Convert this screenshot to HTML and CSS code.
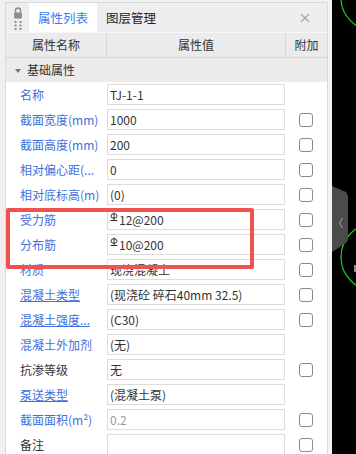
FILE: index.html
```html
<!DOCTYPE html>
<html>
  <head>
    <title>属性列表</title>
    <link rel="stylesheet" href="styles.css">
  </head>
  <body>
    <div class="panel">
      <div class="tabbar">
        <div class="lock">
          <svg width="12" height="24" viewBox="0 0 12 24">
            <path d="M3.5 6.5 V4.5 a2.5 2.5 0 0 1 5 0 V6.5" fill="none" stroke="#8c8c8c" stroke-width="1.6" />
            <rect x="2" y="6.5" width="8" height="6" rx="1" fill="#8c8c8c" />
            <rect x="2.5" y="15" width="2" height="2" fill="#8c8c8c" />
            <rect x="7.5" y="15" width="2" height="2" fill="#8c8c8c" />
            <rect x="2.5" y="18.5" width="2" height="2" fill="#8c8c8c" />
            <rect x="7.5" y="18.5" width="2" height="2" fill="#8c8c8c" />
            <rect x="2.5" y="22" width="2" height="2" fill="#8c8c8c" />
            <rect x="7.5" y="22" width="2" height="2" fill="#8c8c8c" />
          </svg>
        </div>
        <div class="tab active">属性列表</div>
        <div class="tab">图层管理</div>
        <div class="close">
          <svg width="10" height="10" viewBox="0 0 10 10">
            <path d="M1 1 L9 9 M9 1 L1 9" stroke="#a8a8a8" stroke-width="1.2" />
          </svg>
        </div>
      </div>

      <div class="thead">
        <div class="th">属性名称</div>
        <div class="th">属性值</div>
        <div class="th last">附加</div>
      </div>

      <div class="group"><span class="caret"></span>基础属性</div>

      <div class="row">
        <div class="label">名称</div>
        <div class="value">TJ-1-1</div>
        <div></div>
      </div>
      <div class="row">
        <div class="label">截面宽度(mm)</div>
        <div class="value">1000</div>
        <div class="check"></div>
      </div>
      <div class="row">
        <div class="label">截面高度(mm)</div>
        <div class="value">200</div>
        <div class="check"></div>
      </div>
      <div class="row">
        <div class="label">相对偏心距(...</div>
        <div class="value">0</div>
        <div class="check"></div>
      </div>
      <div class="row">
        <div class="label">相对底标高(m)</div>
        <div class="value">(0)</div>
        <div class="check"></div>
      </div>
      <div class="row">
        <div class="label">受力筋</div>
        <div class="value"><svg class="rebar" width="8" height="10" viewBox="0 0 8 10"><ellipse cx="4" cy="4" rx="3" ry="2.3" fill="none" stroke="#333" /><path d="M4 0.5 V8.5 M0.5 8.5 H7.5" stroke="#333" /></svg>12@200</div>
        <div class="check"></div>
      </div>
      <div class="row">
        <div class="label">分布筋</div>
        <div class="value"><svg class="rebar" width="8" height="10" viewBox="0 0 8 10"><ellipse cx="4" cy="4" rx="3" ry="2.3" fill="none" stroke="#333" /><path d="M4 0.5 V8.5 M0.5 8.5 H7.5" stroke="#333" /></svg>10@200</div>
        <div class="check"></div>
      </div>
      <div class="row">
        <div class="label">材质</div>
        <div class="value">现浇混凝土</div>
        <div class="check"></div>
      </div>
      <div class="row">
        <div class="label link">混凝土类型</div>
        <div class="value">(现浇砼 碎石40mm 32.5)</div>
        <div class="check"></div>
      </div>
      <div class="row">
        <div class="label link">混凝土强度...</div>
        <div class="value">(C30)</div>
        <div class="check"></div>
      </div>
      <div class="row">
        <div class="label">混凝土外加剂</div>
        <div class="value">(无)</div>
        <div></div>
      </div>
      <div class="row">
        <div class="label plain">抗渗等级</div>
        <div class="value">无</div>
        <div class="check"></div>
      </div>
      <div class="row">
        <div class="label link">泵送类型</div>
        <div class="value">(混凝土泵)</div>
        <div></div>
      </div>
      <div class="row">
        <div class="label">截面面积(m²)</div>
        <div class="value muted">0.2</div>
        <div class="check"></div>
      </div>
      <div class="row">
        <div class="label plain">备注</div>
        <div class="value"></div>
        <div class="check"></div>
      </div>

      <!-- 标注框 -->
      <div class="mark"></div>
    </div>

    <div class="gutter"></div>

    <div class="canvas">
      <svg width="24" height="454" viewBox="0 0 24 454">
        <circle cx="41" cy="-2" r="32" fill="none" stroke="#19d219" stroke-width="1.2" />
        <circle cx="42.6" cy="257" r="33.6" fill="none" stroke="#19d219" stroke-width="1.2" />
        <rect x="22" y="265" width="3" height="7" fill="#8a8a8a" />
        <polygon points="0,186 14,192 16,196 16,240 14,243 0,252" fill="#4b4b4b" />
        <path d="M10.5 218 L7.5 223 L10.5 228" fill="none" stroke="#8e8e8e" stroke-width="1.2" />
      </svg>
    </div>
  </body>
</html>
```

FILE: styles.css
```css
body {
  margin: 0;
  height: 454px;
  overflow: hidden;
  display: flex;
  background: #f0f0f0;
  font-family: "Noto Sans CJK SC", "Microsoft YaHei", sans-serif;
  font-size: 12px;
  color: #333;
}
.panel {
  position: relative;
  margin-left: 5px;
  margin-top: 2px;
  width: 321px;
  border: 1px solid #d9d9d9;
  border-bottom: none;
  background: #fff;
}
.tabbar {
  display: flex;
  height: 29px;
  background: #eeeef0;
}
.lock {
  width: 23px;
  display: flex;
  justify-content: center;
  padding-top: 3px;
  box-sizing: border-box;
}
.tab {
  width: 68px;
  line-height: 29px;
  text-align: center;
  font-size: 12.5px;
  color: #222;
}
.tab.active {
  background: #fff;
  color: #3a7cf0;
}
.close {
  margin-left: auto;
  width: 27px;
  display: flex;
  align-items: center;
  justify-content: flex-start;
}
.thead {
  display: grid;
  grid-template-columns: 101px 179px 1fr;
  height: 24px;
  border-top: 1px solid #f7f7f7;
  border-bottom: 1px solid #d6d6d6;
  background: #ebebeb;
}
.th {
  line-height: 24px;
  text-align: center;
  border-right: 1px solid #d6d6d6;
  color: #333;
}
.th.last {
  border-right: none;
}
.group {
  height: 24px;
  line-height: 24px;
  background: #ebebeb;
  padding-left: 9px;
  color: #333;
}
.caret {
  display: inline-block;
  width: 0;
  height: 0;
  border-left: 3px solid transparent;
  border-right: 3px solid transparent;
  border-top: 4px solid #777;
  margin-right: 6px;
  vertical-align: 2px;
}
.row {
  display: grid;
  grid-template-columns: 101px 178px 1fr;
  height: 25px;
  align-items: center;
}
.label {
  padding-left: 14px;
  color: #3d6fe0;
  white-space: nowrap;
  overflow: hidden;
}
.label.link {
  text-decoration: underline;
}
.label.plain {
  color: #333;
}
.value {
  height: 21px;
  box-sizing: border-box;
  border: 1px solid #dcdcdc;
  padding-left: 2px;
  line-height: 19px;
  white-space: nowrap;
  overflow: hidden;
  color: #333;
}
.value.muted {
  color: #9a9a9a;
}
.rebar {
  vertical-align: 3px;
  margin-right: 1px;
}
.check {
  justify-self: center;
  width: 14px;
  height: 14px;
  box-sizing: border-box;
  border: 1px solid #8a8a8a;
  border-radius: 3px;
  background: #fff;
}
.mark {
  position: absolute;
  left: 0;
  top: 205px;
  width: 248px;
  height: 61px;
  box-sizing: border-box;
  border: 4px solid #f0524f;
  border-radius: 2px;
}
.gutter {
  width: 4px;
  background: #f4f4f4;
}
.canvas {
  width: 24px;
  background: #000;
}
.canvas svg {
  display: block;
}
```
